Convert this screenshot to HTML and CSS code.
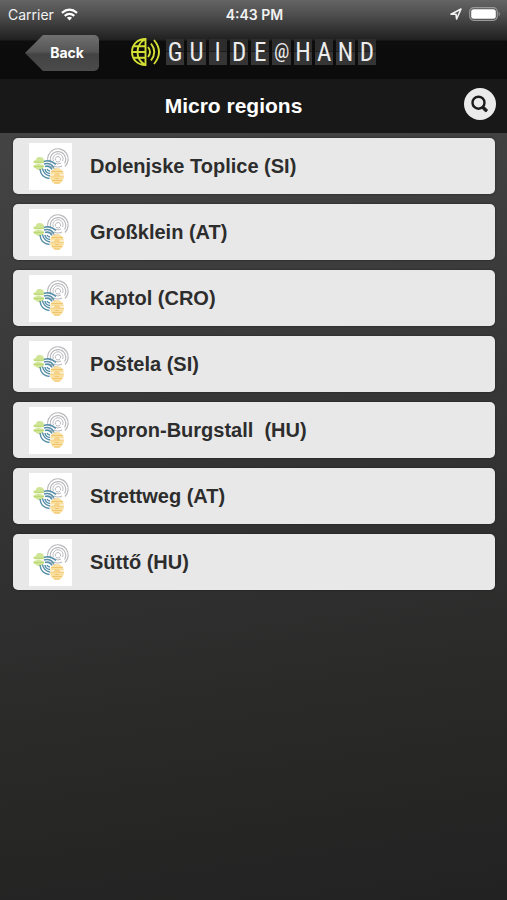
FILE: index.html
```html
<!DOCTYPE html>
<html lang="en">
<head>
<meta charset="utf-8">
<meta name="viewport" content="width=device-width, initial-scale=1">
<title>Micro regions</title>
<link rel="stylesheet" href="styles.css">
</head>
<body>
<svg class="sprite" aria-hidden="true">
  <symbol id="regions-logo" viewBox="0 0 43 47">
    <g fill="none" stroke="#b9b9bd">
      <path d="M19 19a10.300 10.300 0 1 1 17 4.500M22 23a10 10 0 0 0 7 3.500" stroke-width="1.200"/>
      <path d="M22 19.500a7.700 7.700 0 1 1 13.500 1M25 23q4 2 8 0" stroke-width="1.100"/>
      <path d="M24.500 18a5 5 0 1 1 9 0M26 20q3 2 6 0"/>
      <path d="M26.800 17.500a2.600 2.600 0 1 1 4.400 0M27 18.500q2 1 4 0"/>
    </g>
    <g fill="#cfe495">
      <path d="M4 19q1-2 3-2q0-3 3.500-3t4 2q1.500 3 .5 3.500q-2 1-5.500 1q-4 0-5.500-1.500z"/>
      <path d="M4 23q2-2 5.500-2q4 0 5.500 1.500q0 3.500-3.500 4.500q-3 .5-4.500-1.500q-2 0-3-2.500z"/>
    </g>
    <path d="M5 19.300h10M5 23.500h10" stroke="#b5d66a" stroke-width=".8"/>
    <g fill="none" stroke="#578fa8" stroke-width="1.500">
      <path d="M15 18.500q6-2.500 12 3M15 21q6-2 10 3.500M16 23.500q5-1.500 7 3M11 26q1 9 9.500 9.500M13.500 25.500q1 6 7.500 7.500M16 26q.5 4 5 4.500M18 26q1 2 3 2"/>
    </g>
    <ellipse cx="28" cy="33" rx="7" ry="8" fill="#fae0a0"/>
    <path d="M22 28.500h12M21.500 33h13M23 37.500h10M26 31h4M26 35.500h4M25 40h6" fill="none" stroke="#f1c56e"/>
    <path d="M21 32h4M31 32h4" stroke="#fff"/>
  </symbol>
</svg>

<header class="top">
  <div class="status">
    <div class="status-left">
      <span>Carrier</span>
      <svg class="wifi" viewBox="0 0 18 13" aria-hidden="true">
        <g fill="none" stroke="#fff" stroke-width="2.300">
          <path d="M1 4.700Q9-2 17 4.700M3.900 7.900q5.100-4.200 10.200 0"/>
        </g>
        <path d="M6.200 10q2.800-2.200 5.600 0L9 12.800z" fill="#fff"/>
      </svg>
    </div>
    <span class="clock">4:43 PM</span>
    <div class="status-right">
      <svg class="location" viewBox="0 0 12 12" aria-hidden="true">
        <path d="M1 6.200L11 1 6.600 11 6 6.200z" fill="none" stroke="#f2f2f2" stroke-width="1.600" stroke-linejoin="round"/>
      </svg>
      <svg class="battery" viewBox="0 0 32 14" aria-hidden="true">
        <rect x=".7" y=".7" width="27.600" height="12.600" rx="4" fill="none" stroke="#999" stroke-width="1.200"/>
        <rect x="2.200" y="2.200" width="24.600" height="9.600" rx="2.500" fill="#fff"/>
        <path d="M29.700 4.700q2.300 2.300 0 4.600z" fill="#999"/>
      </svg>
    </div>
  </div>
  <div class="brand-bar">
    <button class="back" type="button"><span>Back</span></button>
    <div class="brand">
      <svg class="globe" viewBox="0 0 29 28" aria-hidden="true">
        <g fill="none" stroke="#d3df35" stroke-width="1.900">
          <path d="M14.500 1v26C6 27 1 21 1 14S6 1 14.500 1zM13.500 1.500Q6.500 6 6.500 14t7 12.500M1 14h13.500M3 8.300h11.500M3 19.700h11.500"/>
          <path d="M17 9q4 5 0 10M20 5.500q6.500 8.500 0 17M23 2q10 12 0 24"/>
        </g>
      </svg>
      <div class="tiles" role="img" aria-label="GUIDE@HAND">
        <span>G</span><span>U</span><span>I</span><span>D</span><span>E</span><span class="at">@</span><span>H</span><span>A</span><span>N</span><span>D</span>
      </div>
    </div>
  </div>
</header>

<div class="title-bar">
  <h1>Micro regions</h1>
  <button class="search" type="button" aria-label="Search">
    <svg viewBox="0 0 32 32" aria-hidden="true">
      <circle cx="14.500" cy="14.700" r="6" fill="none" stroke="#1c1c1c" stroke-width="2.400"/>
      <path d="M18.500 19h2l3 3-1.600 2-3.400-3z" fill="#1c1c1c" stroke="#1c1c1c" stroke-linejoin="round"/>
    </svg>
  </button>
</div>

<main>
  <ul class="regions">
    <li><a href="#dolenjske-toplice"><svg class="thumb" aria-hidden="true"><use href="#regions-logo"/></svg><span>Dolenjske Toplice (SI)</span></a></li>
    <li><a href="#grossklein"><svg class="thumb" aria-hidden="true"><use href="#regions-logo"/></svg><span>Großklein (AT)</span></a></li>
    <li><a href="#kaptol"><svg class="thumb" aria-hidden="true"><use href="#regions-logo"/></svg><span>Kaptol (CRO)</span></a></li>
    <li><a href="#postela"><svg class="thumb" aria-hidden="true"><use href="#regions-logo"/></svg><span>Poštela (SI)</span></a></li>
    <li><a href="#sopron-burgstall"><svg class="thumb" aria-hidden="true"><use href="#regions-logo"/></svg><span>Sopron-Burgstall&nbsp; (HU)</span></a></li>
    <li><a href="#strettweg"><svg class="thumb" aria-hidden="true"><use href="#regions-logo"/></svg><span>Strettweg (AT)</span></a></li>
    <li><a href="#sutto"><svg class="thumb" aria-hidden="true"><use href="#regions-logo"/></svg><span>Süttő (HU)</span></a></li>
  </ul>
</main>
</body>
</html>
```

FILE: styles.css
```css
* {
  box-sizing: border-box;
}

body {
  margin: 0;
  min-height: 100vh;
  display: flex;
  flex-direction: column;
  background: #232323;
  font-family: "Liberation Sans", Arial, sans-serif;
}

.sprite {
  position: absolute;
  width: 0;
  height: 0;
}

.top {
  background: linear-gradient(#646464 0, #535353 12px, #202020 40px, #0d0d0d 41px, #0b0b0b 100%);
}

.status {
  display: grid;
  grid-template-columns: 1fr auto 1fr;
  align-items: center;
  height: 28px;
  padding: 0 6px 0 8px;
  color: #f2f2f2;
  font-family: Inter, sans-serif;
  font-size: 14px;
}

.status-left,
.status-right {
  display: flex;
  align-items: center;
  gap: 7px;
}

.status-right {
  justify-content: flex-end;
}

.clock {
  font-weight: 600;
}

.wifi {
  width: 17px;
  height: 13px;
}

.location {
  width: 12px;
  height: 12px;
}

.battery {
  width: 32px;
  height: 14px;
}

.brand-bar {
  display: flex;
  align-items: flex-start;
  gap: 32px;
  height: 51px;
  padding: 7px 25px 0;
}

.back {
  width: 74px;
  height: 36px;
  padding: 0 0 2px 10px;
  border: 0;
  border-radius: 0 5px 5px 0;
  background: linear-gradient(#707070, #555 47%, #434343 53%, #4b4b4b);
  clip-path: polygon(0 50%, 12px 6px, 18px 0, 100% 0, 100% 100%, 18px 100%, 12px 30px);
  color: #fff;
  font-family: Inter, sans-serif;
  font-size: 14px;
  font-weight: bold;
}

.brand {
  display: flex;
  align-items: center;
  gap: 6px;
  padding-top: 3px;
}

.globe {
  width: 29px;
  height: 28px;
}

.tiles {
  display: grid;
  grid-template-columns: repeat(10, 1fr);
  gap: 3px;
  width: 210px;
}

.tiles span {
  height: 26px;
  background: linear-gradient(#2c2c2c 46%, #1c1c1c 46%, #1c1c1c 50%, #353535 50%);
  color: #ededed;
  font-family: "Liberation Sans Narrow", "Roboto Condensed", Roboto, sans-serif;
  font-size: 25px;
  line-height: 28px;
  text-align: center;
}

.tiles .at {
  font-size: 20px;
  line-height: 24px;
}

.title-bar {
  display: grid;
  grid-template-columns: 32px 1fr 32px;
  align-items: center;
  height: 54px;
  padding: 0 11px;
  background: #181818;
}

.title-bar h1 {
  grid-column: 2;
  margin: 0;
  padding-right: 40px;
  color: #fff;
  font-size: 21px;
  line-height: 24px;
  text-align: center;
}

.search {
  width: 32px;
  height: 32px;
  margin-bottom: 4px;
  padding: 0;
  border: 0;
  border-radius: 50%;
  background: #ebebeb;
}

.search svg {
  display: block;
  width: 32px;
  height: 32px;
}

main {
  flex: 1;
  padding: 5px 12px 20px 13px;
  background: linear-gradient(172deg, #444 0, #2f2f2f 58%, #292928 75%, #222 100%);
}

.regions {
  display: flex;
  flex-direction: column;
  gap: 10px;
  margin: 0;
  padding: 0;
  list-style: none;
}

.regions a {
  display: flex;
  align-items: center;
  gap: 18px;
  height: 56px;
  padding: 0 16px;
  border-radius: 5px;
  background: #e8e8e8;
  box-shadow: 0 0 2px #1c1c1c;
  color: #2d2d2d;
  font-size: 20px;
  font-weight: bold;
  text-decoration: none;
}

.thumb {
  flex: none;
  width: 43px;
  height: 47px;
  background: #fff;
}
```
